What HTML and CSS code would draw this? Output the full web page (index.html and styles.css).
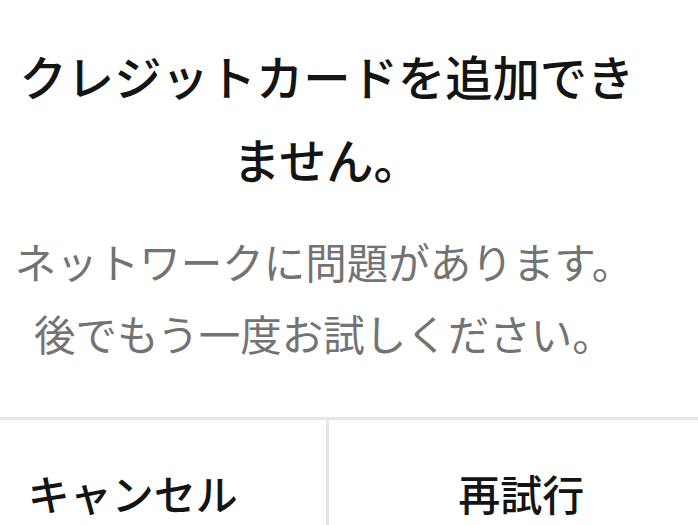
FILE: index.html
```html
<!DOCTYPE html>
<html lang="ja">
<head>
    <meta charset="UTF-8">
    <meta name="viewport" content="width=device-width, initial-scale=1.0">
    <title>エラー</title>
    <link rel="stylesheet" href="styles.css">
</head>
<body>
    <div class="dialog">
        <h2 class="dialog-title">クレジットカードを追加できません。</h2>
        <p class="dialog-message">ネットワークに問題があります。後でもう一度お試しください。</p>
        <div class="dialog-buttons">
            <button type="button" class="dialog-btn">キャンセル</button>
            <button type="button" class="dialog-btn">再試行</button>
        </div>
    </div>
</body>
</html>
```

FILE: styles.css
```css
html, body {
    margin: 0;
    padding: 0;
    background: #ffffff;
    overflow: hidden;
}
body {
    font-family: "Noto Sans CJK JP", "Noto Sans", sans-serif;
}
.dialog {
    width: 774px;
    margin-left: -60px;
    background: #ffffff;
}
.dialog-title {
    margin: 0;
    padding: 34px 68px 0 68px;
    font-size: 47.3px;
    font-weight: 500;
    line-height: 83px;
    color: #141414;
    text-align: center;
}
.dialog-message {
    margin: 0;
    padding: 25px 68px 48px 62px;
    font-size: 41.5px;
    line-height: 72px;
    color: #737373;
    text-align: center;
}
.dialog-buttons {
    display: flex;
    border-top: 3px solid #e6e6e6;
}
.dialog-btn {
    flex: 1;
    height: 144px;
    border: none;
    background: #ffffff;
    font-family: inherit;
    font-size: 42px;
    font-weight: 500;
    color: #141414;
    padding: 0;
}
.dialog-btn + .dialog-btn {
    border-left: 3px solid #e6e6e6;
}
```
